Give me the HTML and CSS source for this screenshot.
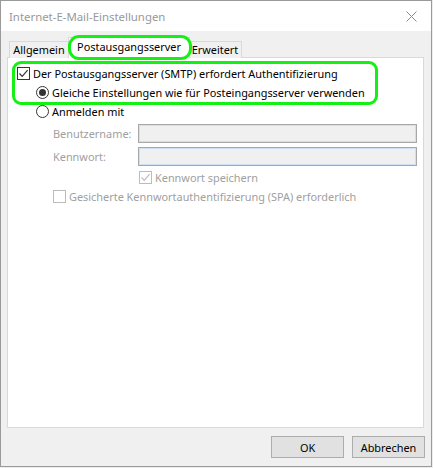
FILE: index.html
```html
<!DOCTYPE html>
<html lang="de">
<head>
<meta charset="utf-8">
<title>Internet-E-Mail-Einstellungen</title>
<link rel="stylesheet" href="styles.css">
</head>
<body>
<div class="window">
  <div class="titlebar">
    <span class="title">Internet-E-Mail-Einstellungen</span>
    <svg class="close" width="11" height="11" viewBox="0 0 11 11"><path d="M0.5 0.5 L10.5 10.5 M10.5 0.5 L0.5 10.5" stroke="#8a8a8a" stroke-width="1" fill="none"/></svg>
  </div>
  <div class="client">
    <div class="tabs">
      <div class="tab tab-first">Allgemein</div>
      <div class="tab tab-active">Postausgangsserver</div>
      <div class="tab tab-last">Erweitert</div>
    </div>
    <div class="panel">
      <div class="row">
        <span class="check checked"><svg width="11" height="11" viewBox="0 0 11 11"><path d="M1.5 5.5 L4.2 8.3 L9.6 2.2" stroke="#333" stroke-width="1.2" fill="none"/></svg></span>
        <span class="label">Der Postausgangsserver (SMTP) erfordert Authentifizierung</span>
      </div>
      <div class="row indent1">
        <span class="radio selected"><span class="dot"></span></span>
        <span class="label">Gleiche Einstellungen wie für Posteingangsserver verwenden</span>
      </div>
      <div class="row indent1">
        <span class="radio"></span>
        <span class="label">Anmelden mit</span>
      </div>
      <div class="field first-field">
        <span class="flabel">Benutzername:</span>
        <span class="input"></span>
      </div>
      <div class="field second-field">
        <span class="flabel">Kennwort:</span>
        <span class="input"></span>
      </div>
      <div class="row indent3">
        <span class="check disabled"><svg width="11" height="11" viewBox="0 0 11 11"><path d="M1.5 5.5 L4.2 8.3 L9.6 2.2" stroke="#bdbdbd" stroke-width="1.2" fill="none"/></svg></span>
        <span class="label dim">Kennwort speichern</span>
      </div>
      <div class="row indent2">
        <span class="check disabled"></span>
        <span class="label dim">Gesicherte Kennwortauthentifizierung (SPA) erforderlich</span>
      </div>
    </div>
    <div class="buttons">
      <div class="btn">OK</div>
      <div class="btn">Abbrechen</div>
    </div>
    <div class="mark mark-tab"></div>
    <div class="mark mark-opts"></div>
  </div>
</div>
</body>
</html>
```
FILE: styles.css
```css
html, body {
  margin: 0;
  padding: 0;
  background: #ededed;
}
body {
  font-family: "Noto Sans", "Open Sans", sans-serif;
  font-size: 10.9px;
  color: #000;
  width: 433px;
  height: 468px;
  overflow: hidden;
}
.window {
  width: 430px;
  height: 465px;
  border: 1px solid #9a9a9a;
  background: #f0f0f0;
  display: flex;
  flex-direction: column;
}
.titlebar {
  height: 30px;
  background: #fff;
  display: flex;
  align-items: center;
  justify-content: space-between;
  padding: 0 14px 0 8px;
  flex: none;
}
.title {
  color: #999;
  font-size: 11.4px;
  margin-top: 1px;
}
.close {
  margin-top: 1px;
}
.client {
  position: relative;
  flex: 1;
  padding: 6px 7px 0 6px;
  display: flex;
  flex-direction: column;
}
.tabs {
  height: 21px;
  display: flex;
  align-items: flex-end;
  padding-left: 2px;
  position: relative;
  z-index: 1;
  margin-bottom: -1px;
}
.tab {
  height: 17px;
  box-sizing: border-box;
  border: 1px solid #d9d9d9;
  border-bottom: none;
  background: #f0f0f0;
  line-height: 16px;
  text-align: center;
  white-space: nowrap;
}
.tab-first {
  width: 60px;
}
.tab-active {
  width: 122px;
  height: 21px;
  background: #fff;
  margin: 0 -1px;
  line-height: 18px;
  position: relative;
}
.tab-last {
  width: 53px;
  border-left: none;
}
.panel {
  height: 371px;
  box-sizing: border-box;
  border: 1px solid #d9d9d9;
  background: #fff;
  padding: 6px 6px 0 9px;
  display: flex;
  flex-direction: column;
}
.row {
  height: 19px;
  display: flex;
  align-items: center;
}
.indent1 { margin-left: 19px; }
.indent2 { margin-left: 36px; }
.indent3 { margin-left: 122px; height: 19px; margin-top: 2px; }
.check {
  width: 13px;
  height: 13px;
  box-sizing: border-box;
  border: 1px solid #333;
  display: inline-flex;
  align-items: center;
  justify-content: center;
  background: #fff;
  flex: none;
}
.check.disabled {
  border-color: #bcbcbc;
}
.radio {
  width: 13px;
  height: 13px;
  box-sizing: border-box;
  border: 1px solid #333;
  border-radius: 50%;
  display: inline-flex;
  align-items: center;
  justify-content: center;
  flex: none;
}
.dot {
  width: 7px;
  height: 7px;
  border-radius: 50%;
  background: #333;
}
.label {
  margin-left: 3px;
  white-space: nowrap;
}
.dim {
  color: #a0a0a0;
}
.field {
  display: flex;
  align-items: center;
  margin-left: 36px;
  height: 19px;
}
.first-field { margin-top: 3px; }
.second-field { margin-top: 4px; }
.flabel {
  width: 85px;
  color: #a0a0a0;
  white-space: nowrap;
}
.input {
  flex: 1;
  height: 19px;
  box-sizing: border-box;
  border: 1px solid #a8a8a8;
  box-shadow: inset 0 0 0 1px #cfe0f4;
  background: #f0f0f0;
}
.buttons {
  display: flex;
  justify-content: flex-end;
  gap: 8px;
  margin-top: 8px;
  margin-right: -1px;
}
.btn {
  width: 73px;
  height: 22px;
  box-sizing: border-box;
  border: 1px solid #adadad;
  background: #e1e1e1;
  display: flex;
  align-items: center;
  justify-content: center;
}
.mark {
  position: absolute;
  border: 3px solid #14f014;
  box-sizing: border-box;
  pointer-events: none;
  z-index: 2;
}
.mark-tab {
  left: 67px;
  top: 4px;
  width: 124px;
  height: 25px;
  border-radius: 11px;
}
.mark-opts {
  left: 11px;
  top: 30px;
  width: 366px;
  height: 44px;
  border-radius: 9px;
}
```
